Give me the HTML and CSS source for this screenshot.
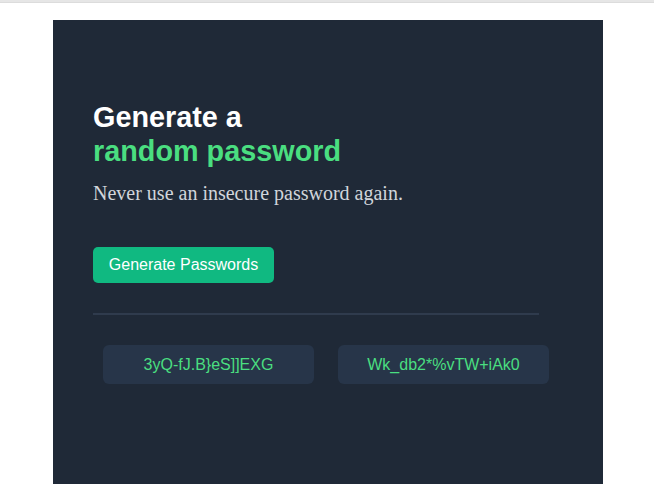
FILE: index.html
```html
<!DOCTYPE html>
<html lang="en">
<head>
    <meta charset="UTF-8">
    <meta name="viewport" content="width=device-width, initial-scale=1.0">
    <title>Password Generator</title>
    <link rel="stylesheet" href="styles.css">
</head>
<body>
    <div class="top-bar"></div>
    <div class="container">
        <h1 class="title">Generate a<br><span class="accent">random password</span></h1>
        <p class="subtitle">Never use an insecure password again.</p>
        <button class="generate-btn">Generate Passwords</button>
        <hr class="divider">
        <div class="passwords">
            <div class="password">3yQ-fJ.B}eS]]EXG</div>
            <div class="password">Wk_db2*%vTW+iAk0</div>
        </div>
    </div>
</body>
</html>
```

FILE: styles.css
```css
* {
    box-sizing: border-box;
}

body {
    margin: 0;
    padding: 0;
    background-color: #fff;
    font-family: "Liberation Sans", Arial, sans-serif;
}

.top-bar {
    height: 3px;
    background-color: #e6e6e6;
    border-bottom: 1px solid #dcdcdc;
}

.container {
    width: 550px;
    height: 464px;
    margin: 17px 0 0 53px;
    padding: 80px 40px 0;
    background-color: #1f2937;
}

.title {
    margin: 0;
    font-size: 28.8px;
    line-height: 34px;
    font-weight: bold;
    color: #fff;
}

.accent {
    color: #4ade80;
}

.subtitle {
    margin: 14px 0 0;
    font-family: "Liberation Serif", "Times New Roman", serif;
    font-size: 20px;
    line-height: 22px;
    color: #d1d5db;
}

.generate-btn {
    margin-top: 43px;
    width: 181px;
    height: 36px;
    padding: 0;
    background-color: #10b981;
    color: #fff;
    border: none;
    border-radius: 5px;
    font-family: "Liberation Sans", Arial, sans-serif;
    font-size: 16px;
    cursor: pointer;
}

.divider {
    width: 446px;
    margin: 30px 0 0;
    border: none;
    height: 2px;
    background-color: #2f3b4d;
}

.passwords {
    display: flex;
    gap: 24px;
    margin-top: 30px;
    padding-left: 10px;
}

.password {
    width: 211px;
    height: 39px;
    line-height: 39px;
    text-align: center;
    background-color: #273549;
    border-radius: 6px;
    color: #4ade80;
    font-size: 16px;
}
```
